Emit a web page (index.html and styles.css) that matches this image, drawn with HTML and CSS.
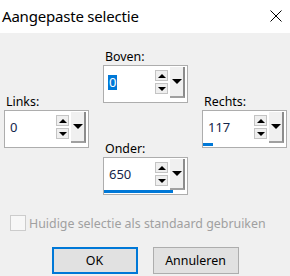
FILE: index.html
```html
<!DOCTYPE html>
<html lang="nl">

<head>
    <meta charset="UTF-8">
    <title>Aangepaste selectie</title>
    <link rel="stylesheet" href="styles.css">
</head>

<body>
    <div class="dialog">
        <div class="titlebar">
            <span class="title">Aangepaste selectie</span>
            <svg class="close" width="12" height="12" viewBox="0 0 12 12">
                <path d="M0.5 0.5 L11.5 11.5 M11.5 0.5 L0.5 11.5" stroke="#000" stroke-width="1" fill="none"/>
            </svg>
        </div>

        <div class="content">
            <div class="cross">
                <div class="col side">
                    <div class="field">
                        <div class="field-label">Links:</div>
                        <div class="spin">
                            <div class="spin-row">
                                <span class="value">0</span>
                                <div class="arrows">
                                    <span class="arrow up"></span>
                                    <span class="arrow down"></span>
                                </div>
                                <span class="drop"></span>
                            </div>
                            <div class="track"></div>
                        </div>
                    </div>
                </div>

                <div class="col middle">
                    <div class="field">
                        <div class="field-label">Boven:</div>
                        <div class="spin">
                            <div class="spin-row">
                                <span class="value selected">0</span>
                                <div class="arrows">
                                    <span class="arrow up"></span>
                                    <span class="arrow down"></span>
                                </div>
                                <span class="drop"></span>
                            </div>
                            <div class="track"></div>
                        </div>
                    </div>
                    <div class="field">
                        <div class="field-label">Onder:</div>
                        <div class="spin">
                            <div class="spin-row">
                                <span class="value">650</span>
                                <div class="arrows">
                                    <span class="arrow up"></span>
                                    <span class="arrow down"></span>
                                </div>
                                <span class="drop"></span>
                            </div>
                            <div class="track"><span class="bar" style="width: 69px;"></span></div>
                        </div>
                    </div>
                </div>

                <div class="col side">
                    <div class="field">
                        <div class="field-label">Rechts:</div>
                        <div class="spin">
                            <div class="spin-row">
                                <span class="value">117</span>
                                <div class="arrows">
                                    <span class="arrow up"></span>
                                    <span class="arrow down"></span>
                                </div>
                                <span class="drop"></span>
                            </div>
                            <div class="track"><span class="bar" style="width: 10px;"></span></div>
                        </div>
                    </div>
                </div>
            </div>

            <label class="check disabled">
                <span class="box"></span>
                Huidige selectie als standaard gebruiken
            </label>

            <div class="buttons">
                <button class="btn default">OK</button>
                <button class="btn">Annuleren</button>
            </div>
        </div>
    </div>
</body>

</html>
```

FILE: styles.css
```css
body {
    margin: 0;
    width: 290px;
    height: 276px;
    overflow: hidden;
    background-color: #f0f0f0;
    font-family: "Noto Sans", "Open Sans", sans-serif;
    font-size: 12.4px;
    color: #000;
}

.dialog {
    display: flex;
    flex-direction: column;
}

.titlebar {
    height: 31px;
    background-color: #fff;
    display: flex;
    align-items: center;
    justify-content: space-between;
    padding: 0 8px 2px 2px;
}

.title {
    font-size: 15px;
    letter-spacing: -0.2px;
    color: #000;
}

.close {
    display: block;
}

.content {
    padding: 16px 0 0 4px;
}

.cross {
    display: flex;
    gap: 14px;
}

.col {
    width: 85px;
    display: flex;
    flex-direction: column;
}

.side {
    padding-top: 45px;
}

.middle {
    gap: 38px;
}

.field-label {
    height: 16px;
    line-height: 16px;
    padding-left: 2px;
}

.spin {
    box-sizing: border-box;
    height: 38px;
    display: flex;
    flex-direction: column;
    background-color: #fff;
    border: 1px solid #adadad;
    padding: 0 2px 1px 0;
}

.spin-row {
    flex: 1;
    display: flex;
    align-items: flex-start;
}

.value {
    flex: none;
    margin: 9px auto 0 4px;
    height: 15px;
    line-height: 15px;
    padding: 0 1px;
    color: #14254a;
    font-size: 13px;
}

.value.selected {
    background-color: #0078d7;
    color: #fff;
}

.track {
    height: 3px;
    margin-right: 15px;
}

.bar {
    display: block;
    height: 3px;
    background-color: #0078d7;
}

.arrows {
    display: flex;
    flex-direction: column;
    gap: 2px;
    padding-top: 4px;
    margin-right: 2px;
}

.arrow {
    box-sizing: border-box;
    width: 13px;
    height: 11px;
    border: 1px solid #c4c4c4;
    background-color: #efefef;
    display: flex;
    align-items: center;
    justify-content: center;
}

.arrow::after {
    content: "";
    border-left: 4px solid transparent;
    border-right: 4px solid transparent;
}

.arrow.up::after {
    border-bottom: 4px solid #000;
}

.arrow.down::after {
    border-top: 4px solid #000;
}

.drop {
    box-sizing: border-box;
    width: 15px;
    height: 31px;
    margin-top: 1px;
    background-color: #f0f0f0;
    border-right: 2px solid #8c8c8c;
    border-bottom: 2px solid #a0a0a0;
    display: flex;
    align-items: center;
    justify-content: center;
}

.drop::after {
    content: "";
    border-left: 5px solid transparent;
    border-right: 5px solid transparent;
    border-top: 5px solid #000;
}

.check {
    display: flex;
    align-items: center;
    gap: 3px;
    margin: 20px 0 0 6px;
    height: 16px;
}

.check.disabled {
    color: #a0a0a0;
}

.check .box {
    box-sizing: border-box;
    width: 16px;
    height: 16px;
    border: 1px solid #cccccc;
    background-color: #f7f7f7;
}

.buttons {
    display: flex;
    justify-content: center;
    gap: 15px;
    margin-top: 16px;
    padding-right: 4px;
}

.btn {
    box-sizing: border-box;
    width: 86px;
    height: 27px;
    font-family: inherit;
    font-size: 12.4px;
    color: #000;
    background-color: #e1e1e1;
    border: 1px solid #adadad;
    padding: 0;
}

.btn.default {
    border: 2px solid #0078d7;
}
```
